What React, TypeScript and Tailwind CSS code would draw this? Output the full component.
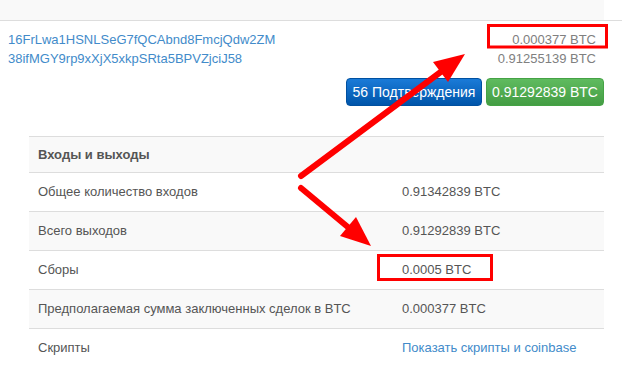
import React from "react";

const rows: { label: string; value: string; link?: boolean }[] = [
  { label: "Общее количество входов", value: "0.91342839 BTC" },
  { label: "Всего выходов", value: "0.91292839 BTC" },
  { label: "Сборы", value: "0.0005 BTC" },
  { label: "Предполагаемая сумма заключенных сделок в BTC", value: "0.000377 BTC" },
  { label: "Скрипты", value: "Показать скрипты и coinbase", link: true },
];

const Annotations: React.FC = () => (
  <svg className="absolute inset-0 pointer-events-none" width={622} height={378} viewBox="0 0 622 378">
    <g stroke="#ff0000" strokeWidth={6} strokeLinecap="round" fill="none">
      <line x1={301} y1={176} x2={442} y2={71} />
      <line x1={301} y1={188} x2={349} y2={228} />
    </g>
    <g fill="#ff0000">
      <polygon points="465,54 448,82 433,62" />
      <polygon points="371,246 340,236 356,217" />
    </g>
    <g stroke="#ff0000" strokeWidth={3} fill="none">
      <rect x={488.5} y={25.5} width={118} height={21.5} />
      <rect x={378.5} y={255.5} width={113} height={24} />
    </g>
  </svg>
);

export default function App() {
  return (
    <div className="relative w-[622px] h-[378px] overflow-hidden bg-white text-[13px] text-[#555] font-['Liberation_Sans',Arial,sans-serif]">
      <div className="border-b border-[#ddd]">
        <div className="w-[604px] h-[20px] bg-[#f9f9f9]" />
      </div>

      <div className="w-[604px] flex justify-between pl-2 pr-2 pt-[9px] leading-[19px]">
        <div className="flex flex-col text-[#428bca]">
          <span>16FrLwa1HSNLSeG7fQCAbnd8FmcjQdw2ZM</span>
          <span>38ifMGY9rp9xXjX5xkpSRta5BPVZjciJ58</span>
        </div>
        <div className="flex flex-col items-end text-[#808080]">
          <span>0.000377 BTC</span>
          <span>0.91255139 BTC</span>
        </div>
      </div>

      <div className="w-[604px] flex justify-end gap-1 mt-[10px]">
        <div className="h-[28px] w-[136px] rounded-[4px] border border-[#0050a0] bg-gradient-to-b from-[#1a7bd8] to-[#0055aa] text-white text-[14px] flex items-center justify-center">
          56 Подтверждения
        </div>
        <div className="h-[28px] w-[118px] rounded-[4px] border border-[#45a345] bg-gradient-to-b from-[#5fbb5f] to-[#449d44] text-white text-[14px] flex items-center justify-center">
          0.91292839 BTC
        </div>
      </div>

      <div className="ml-[29px] w-[575px] mt-[30px] border-t border-[#ddd]">
        <div className="h-[35px] bg-[#f9f9f9] flex items-center pl-[9px] font-bold">
          Входы и выходы
        </div>
        {rows.map((r, i) => (
          <div
            key={r.label}
            className={`h-[39px] border-t border-[#ddd] flex items-center ${i % 2 === 1 ? "bg-[#f9f9f9]" : "bg-white"}`}
          >
            <div className="w-[373px] pl-[9px]">{r.label}</div>
            <div className={r.link ? "text-[#428bca]" : ""}>{r.value}</div>
          </div>
        ))}
      </div>

      <Annotations />
    </div>
  );
}
